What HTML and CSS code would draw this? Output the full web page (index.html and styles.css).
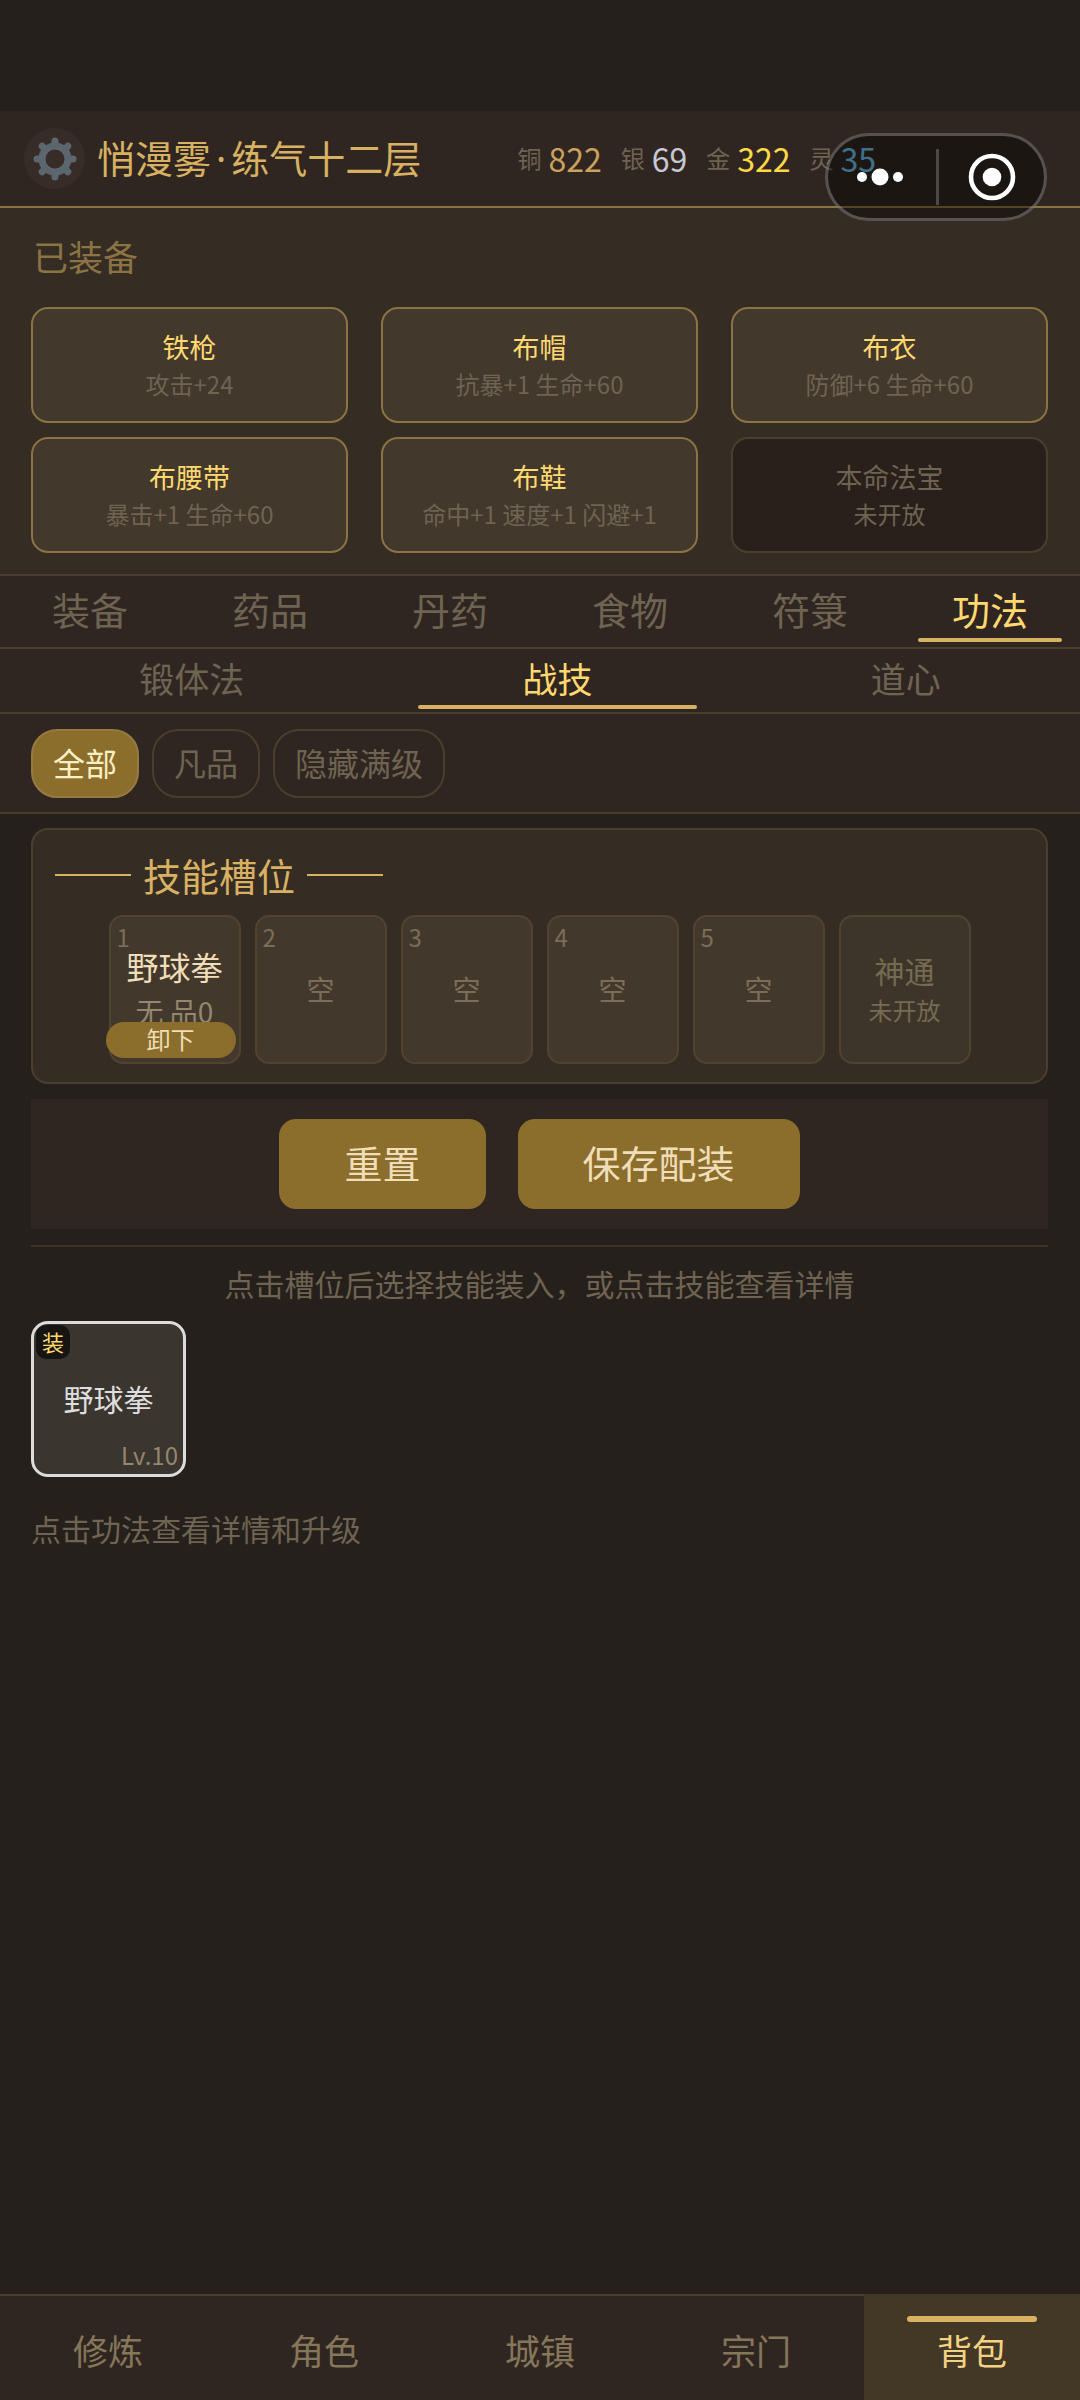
FILE: index.html
```html
<!DOCTYPE html>
<html lang="zh-CN">
<head>
<meta charset="utf-8">
<meta name="viewport" content="width=device-width, initial-scale=1">
<title>背包</title>
<link rel="stylesheet" href="styles.css">
</head>
<body>
<div class="app">
  <header class="topbar">
    <button class="gear" type="button" aria-label="设置">
      <svg width="44" height="44" viewBox="-22 -22 44 44" fill="none" stroke="currentColor" stroke-width="7">
        <circle r="13"/>
        <g stroke-linecap="round" stroke-width="7">
          <path d="M0-15V-18M0 15V18M-15 0H-18M15 0H18"/>
          <path d="M10.6-10.6L12.8-12.8M10.6 10.6L12.8 12.8M-10.6-10.6L-12.8-12.8M-10.6 10.6L-12.8 12.8"/>
        </g>
      </svg>
    </button>
    <h1 class="player">悄漫雾<span class="dot">·</span>练气十二层</h1>
    <dl class="wallet">
      <div class="coin"><dt>铜</dt><dd class="copper">822</dd></div>
      <div class="coin"><dt>银</dt><dd class="silver">69</dd></div>
      <div class="coin"><dt>金</dt><dd class="gold">322</dd></div>
      <div class="coin"><dt>灵</dt><dd class="spirit">35</dd></div>
    </dl>
    <div class="capsule">
      <button class="capsule-btn" type="button" aria-label="更多">
        <svg width="48" height="20" viewBox="-24 -10 48 20" fill="currentColor"><circle cx="-18" r="5"/><circle r="8.5"/><circle cx="18" r="5"/></svg>
      </button>
      <button class="capsule-btn" type="button" aria-label="关闭">
        <svg width="48" height="48" viewBox="-24 -24 48 48" fill="currentColor"><circle r="21" fill="none" stroke="currentColor" stroke-width="4.6"/><circle r="9.3"/></svg>
      </button>
    </div>
  </header>

  <section class="equipped">
    <h2 class="equipped-title">已装备</h2>
    <div class="gear-grid">
      <button class="gear-card" type="button"><span class="gear-name">铁枪</span><span class="gear-stat">攻击+24</span></button>
      <button class="gear-card" type="button"><span class="gear-name">布帽</span><span class="gear-stat">抗暴+1 生命+60</span></button>
      <button class="gear-card" type="button"><span class="gear-name">布衣</span><span class="gear-stat">防御+6 生命+60</span></button>
      <button class="gear-card" type="button"><span class="gear-name">布腰带</span><span class="gear-stat">暴击+1 生命+60</span></button>
      <button class="gear-card" type="button"><span class="gear-name">布鞋</span><span class="gear-stat">命中+1 速度+1 闪避+1</span></button>
      <button class="gear-card locked" type="button"><span class="gear-name">本命法宝</span><span class="gear-stat">未开放</span></button>
    </div>
  </section>

  <nav class="tabs">
    <button class="tab" type="button">装备</button>
    <button class="tab" type="button">药品</button>
    <button class="tab" type="button">丹药</button>
    <button class="tab" type="button">食物</button>
    <button class="tab" type="button">符箓</button>
    <button class="tab active" type="button">功法</button>
  </nav>
  <nav class="tabs subtabs">
    <button class="tab" type="button">锻体法</button>
    <button class="tab active" type="button">战技</button>
    <button class="tab" type="button">道心</button>
  </nav>
  <div class="filters">
    <button class="chip on" type="button">全部</button>
    <button class="chip" type="button">凡品</button>
    <button class="chip" type="button">隐藏满级</button>
  </div>

  <main class="content">
    <section class="slots-panel">
      <h2 class="slots-title">技能槽位</h2>
      <div class="slots">
        <div class="slot">
          <span class="slot-no">1</span>
          <span class="slot-skill">野球拳</span>
          <span class="slot-grade">无 品0</span>
          <button class="unequip" type="button">卸下</button>
        </div>
        <div class="slot"><span class="slot-no">2</span><span class="slot-empty">空</span></div>
        <div class="slot"><span class="slot-no">3</span><span class="slot-empty">空</span></div>
        <div class="slot"><span class="slot-no">4</span><span class="slot-empty">空</span></div>
        <div class="slot"><span class="slot-no">5</span><span class="slot-empty">空</span></div>
        <div class="slot sealed"><span class="sealed-name">神通</span><span class="sealed-note">未开放</span></div>
      </div>
    </section>

    <div class="actions">
      <button class="action" type="button">重置</button>
      <button class="action" type="button">保存配装</button>
    </div>

    <p class="hint">点击槽位后选择技能装入，或点击技能查看详情</p>
    <div class="skills">
      <button class="skill" type="button">
        <span class="skill-badge">装</span>
        <span class="skill-name">野球拳</span>
        <span class="skill-level">Lv.10</span>
      </button>
    </div>
    <p class="foot-hint">点击功法查看详情和升级</p>
  </main>

  <nav class="bottom-nav">
    <a class="nav-item" href="#train">修炼</a>
    <a class="nav-item" href="#role">角色</a>
    <a class="nav-item" href="#town">城镇</a>
    <a class="nav-item" href="#sect">宗门</a>
    <a class="nav-item current" href="#bag" aria-current="page">背包</a>
  </nav>
</div>
</body>
</html>
```
FILE: styles.css
```css
:root {
  --bg: #25201b;
  --bar: #302621;
  --panel: #352c24;
  --card: #42382c;
  --line: #4c3e2c;
  --bronze: #8b7343;
  --gold: #d8b162;
  --bright: #ffd970;
  --button: #8b6e2c;
  --cream: #f0deb8;
  --muted: #6f6352;
}

* { box-sizing: border-box; }

body {
  margin: 0;
  background: var(--bg);
  color: var(--muted);
  font-family: "Noto Sans CJK SC", sans-serif;
}

h1, h2, p, dl, dd { margin: 0; font-weight: 400; }

button {
  margin: 0;
  padding: 0;
  border: 0;
  background: none;
  color: inherit;
  font: inherit;
}

.app {
  display: flex;
  flex-direction: column;
  min-height: 100vh;
  padding-top: 111px;
}

/* top bar */
.topbar {
  position: relative;
  display: flex;
  align-items: center;
  height: 97px;
  padding: 0 204px 0 24px;
  background: var(--bar);
  border-bottom: 2px solid var(--bronze);
}

.gear {
  display: flex;
  align-items: center;
  justify-content: center;
  width: 61px;
  height: 61px;
  border-radius: 50%;
  background: #372c27;
  color: #5b666f;
}

.player {
  margin-left: 12px;
  padding-bottom: 2px;
  color: var(--gold);
  font-family: "Noto Sans", "Noto Sans CJK SC", sans-serif;
  font-size: 38px;
  line-height: 48px;
}

.dot { margin: 0 5px; }

.wallet {
  display: flex;
  gap: 19px;
  margin-left: auto;
}

.coin {
  display: flex;
  align-items: center;
  gap: 7px;
  padding-bottom: 2px;
  line-height: 48px;
}

.coin dt { font-size: 24px; }
.coin dd { font-size: 32px; }
.copper { color: #c9a25e; }
.silver { color: #c6c8d2; }
.gold { color: #ffd84a; }
.spirit { color: #6abbe3; }

.capsule {
  position: absolute;
  top: 22px;
  right: 33px;
  display: flex;
  width: 222px;
  height: 88px;
  border: 3px solid rgba(255, 255, 255, 0.25);
  border-radius: 44px;
  background: rgba(0, 0, 0, 0.4);
  color: #fff;
}

.capsule-btn {
  display: flex;
  flex: 1;
  align-items: center;
  justify-content: center;
  padding-right: 4px;
}

.capsule-btn + .capsule-btn {
  position: relative;
  padding: 0 0 0 4px;
}

.capsule-btn + .capsule-btn::before {
  content: "";
  position: absolute;
  top: 13px;
  bottom: 13px;
  left: 0;
  width: 3px;
  background: rgba(255, 255, 255, 0.22);
}

/* equipped items */
.equipped {
  padding: 23px 32px 21px 31px;
  background: var(--panel);
}

.equipped-title {
  padding-left: 2px;
  margin-bottom: 26px;
  color: var(--bronze);
  font-size: 35px;
  line-height: 50px;
}

.gear-grid {
  display: grid;
  grid-template-columns: repeat(3, 1fr);
  gap: 14px 33px;
}

.gear-card {
  display: flex;
  flex-direction: column;
  align-items: center;
  justify-content: center;
  height: 116px;
  padding-bottom: 2px;
  border: 2px solid var(--bronze);
  border-radius: 17px;
  background: var(--card);
}

.gear-name {
  color: var(--bright);
  font-size: 27px;
  line-height: 39px;
}

.gear-stat {
  font-size: 24px;
  line-height: 35px;
}

.gear-card.locked {
  border-color: var(--line);
  background: #29201b;
}

.locked .gear-name { color: var(--muted); }

/* tab rows */
.tabs {
  display: flex;
  height: 75px;
  border-top: 2px solid var(--line);
  border-bottom: 2px solid var(--line);
  background: var(--bar);
  font-size: 38px;
}

.tab {
  position: relative;
  flex: 1;
  padding-bottom: 7px;
}

.tab.active { color: var(--bright); }

.tab.active::after {
  content: "";
  position: absolute;
  right: 10%;
  bottom: 5px;
  left: 10%;
  height: 4px;
  border-radius: 2px;
  background: var(--gold);
}

.subtabs {
  height: 65px;
  border-top: 0;
  font-size: 35px;
}

.subtabs .tab { flex: 1 1 auto; }
.subtabs .tab.active::after { bottom: 3px; }

.filters {
  display: flex;
  gap: 13px;
  padding: 15px 31px 14px;
  border-bottom: 2px solid var(--line);
  background: var(--bar);
}

.chip {
  height: 69px;
  padding: 0 20px 4px;
  border: 2px solid var(--line);
  border-radius: 26px;
  font-size: 32px;
}

.chip.on {
  border-color: #957a42;
  background: var(--button);
  color: #fff0c4;
}

/* skill slots */
.content {
  display: flex;
  flex: 1;
  flex-direction: column;
  padding: 14px 32px 14px 31px;
}

.slots-panel {
  padding: 21px 22px 18px;
  border: 2px solid var(--line);
  border-radius: 17px;
  background: var(--panel);
}

.slots-title {
  display: flex;
  align-items: center;
  gap: 12px;
  margin-bottom: 16px;
  color: var(--gold);
  font-size: 38px;
  line-height: 48px;
}

.slots-title::before,
.slots-title::after {
  content: "";
  width: 76px;
  height: 2px;
  background: var(--gold);
}

.slots {
  display: flex;
  justify-content: center;
  gap: 14px;
}

.slot {
  position: relative;
  display: flex;
  flex-direction: column;
  align-items: center;
  justify-content: center;
  width: 132px;
  height: 149px;
  padding-bottom: 2px;
  border: 2px solid #514330;
  border-radius: 14px;
  background: var(--card);
}

.slot-no {
  position: absolute;
  top: 5px;
  left: 6px;
  font-size: 24px;
  line-height: 30px;
  color: #7b6d58;
}

.slot-skill {
  color: var(--cream);
  font-size: 32px;
  line-height: 45px;
}

.slot-grade {
  color: #95866f;
  font-size: 28px;
  line-height: 45px;
}

.slot-empty { font-size: 28px; color: #7b6d58; }

.unequip {
  position: absolute;
  bottom: 4px;
  left: -5px;
  width: 130px;
  height: 36px;
  padding-bottom: 2px;
  border-radius: 18px;
  background: var(--button);
  color: var(--cream);
  font-size: 24px;
  line-height: 34px;
}

.slot.sealed {
  background: #3e352a;
  color: #766a52;
}

.sealed-name { font-size: 30px; line-height: 42px; }
.sealed-note { font-size: 24px; line-height: 37px; }

/* loadout actions */
.actions {
  display: flex;
  justify-content: center;
  gap: 32px;
  margin: 15px 0 16px;
  padding: 20px;
  background: var(--bar);
}

.action {
  height: 90px;
  padding: 0 65px 5px;
  border-radius: 17px;
  background: var(--button);
  color: var(--cream);
  font-size: 38px;
}

.hint {
  padding: 14px 0 15px;
  border-top: 2px solid #3e3223;
  font-size: 30px;
  line-height: 45px;
  text-align: center;
}

.skills { display: flex; }

.skill {
  position: relative;
  width: 155px;
  height: 156px;
  padding-bottom: 3px;
  border: 3px solid #dcdcdc;
  border-radius: 17px;
  background: #3a352f;
}

.skill-name {
  color: #dedede;
  font-size: 30px;
}

.skill-badge {
  position: absolute;
  top: 1px;
  left: 2px;
  width: 34px;
  height: 34px;
  border-radius: 10px;
  background: #171511;
  color: var(--bright);
  font-size: 22px;
  line-height: 32px;
}

.skill-level {
  position: absolute;
  right: 5px;
  bottom: 2px;
  color: #95866f;
  font-size: 24px;
  line-height: 34px;
}

.foot-hint {
  margin-top: 29px;
  font-size: 30px;
  line-height: 45px;
}

/* bottom navigation */
.bottom-nav {
  position: sticky;
  bottom: 0;
  display: flex;
  height: 106px;
  background: var(--bar);
}

.nav-item {
  position: relative;
  flex: 1;
  padding-top: 29px;
  border-top: 2px solid var(--line);
  color: #86775a;
  font-size: 35px;
  line-height: 50px;
  text-align: center;
  text-decoration: none;
}

.nav-item.current {
  border-color: #433725;
  background: #433725;
  color: #f3d283;
}

.nav-item.current::before {
  content: "";
  position: absolute;
  top: 20px;
  right: 20%;
  left: 20%;
  height: 6px;
  border-radius: 3px;
  background: var(--gold);
}
```
